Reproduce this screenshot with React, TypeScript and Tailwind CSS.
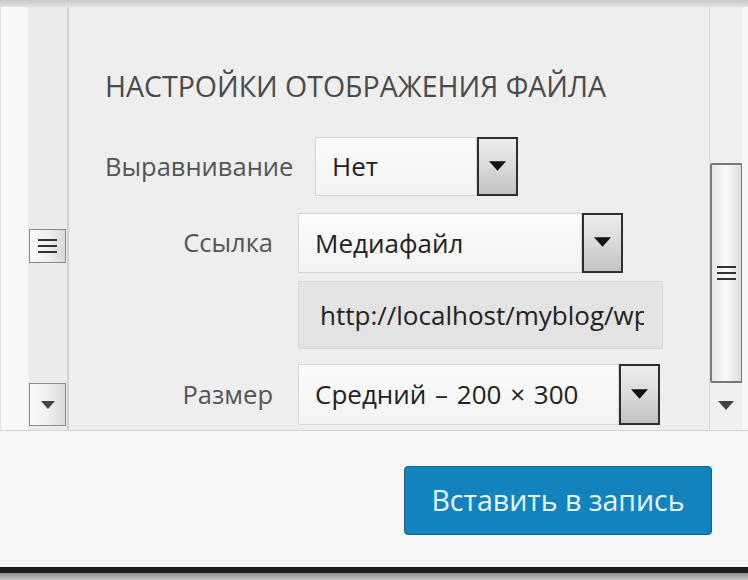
const font = { fontFamily: '"Open Sans", "Noto Sans", sans-serif' };

const Triangle = ({ w = 17, h = 10 }: { w?: number; h?: number }) => (
  <svg width={w} height={h} viewBox="0 0 18 10">
    <path d="M0 0 H18 L9 10 Z" fill="#111" />
  </svg>
);

const Select = ({ value, bodyW, h }: { value: string; bodyW: string; h: string }) => (
  <div className={`flex ${h}`}>
    <div
      className={`${bodyW} h-full flex items-center pl-[16px] bg-gradient-to-b from-[#fbfbfb] to-[#f3f3f3] border border-[#d6d6d6] text-[26px] text-[#222] whitespace-nowrap overflow-hidden [word-spacing:2px]`}
    >
      {value}
    </div>
    <div className="w-[41px] h-full flex items-center justify-center pb-[2px] border-2 border-[#2e2e2e] bg-gradient-to-b from-[#ececec] via-[#dadada] to-[#c2c2c2]">
      <Triangle />
    </div>
  </div>
);

const Grip = () => (
  <div className="flex flex-col gap-[4px]">
    <div className="w-[19px] h-[2px] bg-[#333]" />
    <div className="w-[19px] h-[2px] bg-[#333]" />
    <div className="w-[19px] h-[2px] bg-[#333]" />
  </div>
);

export default function App() {
  return (
    <div className="w-[748px] h-[580px] flex flex-col bg-[#f7f7f7] overflow-hidden" style={font}>
      <div className="h-[7px] bg-gradient-to-b from-[#c9c9c9] to-[#e2e2e2]" />

      <div className="h-[424px] flex border-b border-[#d4d4d4]">
        <div className="w-[28px] bg-[#f8f8f8] border-l border-[#e2e2e2]" />

        <div className="w-[41px] bg-[#ebebeb] border-r-2 border-[#d2d2d2] flex flex-col items-start pt-[222px] pl-[1px]">
          <div className="w-[37px] h-[34px] flex items-center justify-center border border-[#8a8a8a] bg-gradient-to-r from-[#fafafa] via-[#f0f0f0] to-[#d8d8d8]">
            <Grip />
          </div>
          <div className="mt-[120px] w-[37px] h-[43px] flex items-center justify-center border border-[#8a8a8a] bg-gradient-to-r from-[#fafafa] via-[#f0f0f0] to-[#d8d8d8]">
            <svg width="14" height="8" viewBox="0 0 14 8">
              <path d="M0 0 H14 L7 8 Z" fill="#444" />
            </svg>
          </div>
        </div>

        <div className="flex-1 bg-[#eeeeee] pl-[36px] pt-[61px]">
          <div className="text-[28.5px] text-[#4a4a4a] leading-[36px] whitespace-nowrap">
            НАСТРОЙКИ ОТОБРАЖЕНИЯ ФАЙЛА
          </div>

          <div className="mt-[33px] flex items-center gap-[24px]">
            <div className="w-[186px] text-right text-[25.5px] text-[#555] whitespace-nowrap">Выравнивание</div>
            <Select value="Нет" bodyW="w-[162px]" h="h-[59px]" />
          </div>

          <div className="mt-[17px] flex items-start gap-[25px]">
            <div className="w-[168px] pt-[10px] text-right text-[25.5px] text-[#555] whitespace-nowrap">Ссылка</div>
            <div className="flex flex-col">
              <Select value="Медиафайл" bodyW="w-[284px]" h="h-[60px]" />
              <div className="mt-[8px] w-[365px] h-[68px] flex items-center pl-[21px] pr-[18px] bg-[#e3e3e3] border border-[#d8d8d8] text-[26px] text-[#222] whitespace-nowrap">
                <span className="overflow-hidden">http://localhost/myblog/wp</span>
              </div>
            </div>
          </div>

          <div className="mt-[15px] flex items-center gap-[25px]">
            <div className="w-[168px] text-right text-[25.5px] text-[#555] whitespace-nowrap">Размер</div>
            <Select value="Средний – 200 × 300" bodyW="w-[321px]" h="h-[61px]" />
          </div>
        </div>

        <div className="w-[33px] bg-[#efefef] border-l border-[#dadada] flex flex-col items-center pt-[156px]">
          <div className="w-[33px] h-[220px] flex items-center justify-center border-2 border-[#7a7a7a] rounded-[2px] bg-gradient-to-r from-[#e6e6e6] via-[#fafafa] to-[#dcdcdc]">
            <Grip />
          </div>
          <div className="mt-[18px]">
            <svg width="16" height="9" viewBox="0 0 16 9">
              <path d="M0 0 H16 L8 9 Z" fill="#444" />
            </svg>
          </div>
        </div>
        <div className="w-[6px] bg-[#f6f6f6]" />
      </div>

      <div className="flex-1 flex justify-end items-start pt-[35px] pr-[36px]">
        <button className="w-[308px] h-[69px] rounded-[4px] bg-[#1383bd] border border-[#0b6597] text-[28.5px] text-[#e9f7ff]">
          Вставить в запись
        </button>
      </div>

      <div className="h-[6px] bg-[#1c1c1c]" />
      <div className="h-[7px] bg-gradient-to-b from-[#8c8c8c] to-[#c8c8c8]" />
    </div>
  );
}
